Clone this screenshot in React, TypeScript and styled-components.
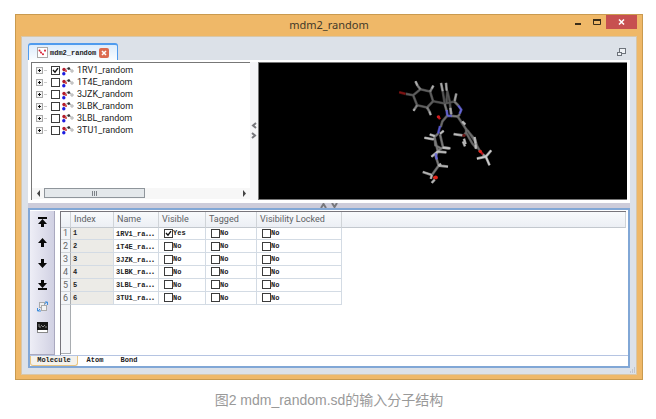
import React, { useState } from "react";
import styled, { createGlobalStyle } from "styled-components";

const mono = `"Liberation Mono", monospace`;
const humanist = `"Noto Sans", "Open Sans", sans-serif`;
const compact = `Roboto, "Open Sans", sans-serif`;

const GlobalStyle = createGlobalStyle`
  *, *::before, *::after { box-sizing: border-box; }
  body { margin: 0; background: #fff; }
  button { appearance: none; border: 0; background: none; padding: 0; margin: 0; font: inherit; color: inherit; }
`;

const Page = styled.main`
  padding: 14px 13px 0 15px;
`;

const Window = styled.section`
  border: 1px solid #c99a4f;
  background: #efb868;
  padding: 0 5px 4px;
`;

const TitleBar = styled.header`
  display: grid;
  grid-template-columns: 1fr auto 1fr;
  height: 21px;
`;

const Title = styled.h1`
  grid-column: 2;
  margin: 0;
  font: 400 11px/20px ${humanist};
  color: #43382a;
`;

const WindowButtons = styled.div`
  display: flex;
  justify-content: flex-end;
`;

const WindowButton = styled.button<{ $close?: boolean }>`
  display: flex;
  align-items: center;
  justify-content: center;
  width: ${(p) => (p.$close ? 31 : 19)}px;
  height: 14px;
  background: ${(p) => (p.$close ? "#c75050" : "transparent")};
`;

const Client = styled.div`
  background: #dce1e8;
  border: 1px solid #d9c7a8;
  padding: 6px 6px 0;
`;

const DocumentBar = styled.div`
  display: flex;
  justify-content: space-between;
  align-items: center;
  height: 17px;
`;

const DocumentTab = styled.div`
  display: flex;
  align-items: center;
  gap: 3px;
  width: 90px;
  height: 17px;
  padding: 0 8px;
  border: 1px solid #4f9bee;
  border-top-width: 2px;
  border-bottom: 0;
  border-radius: 3px 3px 0 0;
  background: linear-gradient(#dcecfc, #fafdff);
  font: 700 7px/12px ${mono};
  color: #222;
  white-space: nowrap;
`;

const DocumentIcon = styled.svg`
  flex: none;
  margin-right: -1px;
`;

const CloseTab = styled.button`
  display: flex;
  flex: none;
  align-items: center;
  justify-content: center;
  width: 10px;
  height: 10px;
  border-radius: 2px;
  background: #dc6b50;
`;

const FloatButton = styled.button`
  display: flex;
  margin-right: 4px;
`;

const ViewerPane = styled.div`
  display: flex;
  padding: 2px 3px 3px;
  background: #fff;
`;

const TreePanel = styled.section`
  display: flex;
  flex-direction: column;
  flex: 219 1 0;
  min-height: 137px;
  border-left: 1px solid #777;
  border-top: 1px solid #777;
  background: #fff;
`;

const TreeList = styled.ul`
  display: grid;
  grid-template-rows: repeat(6, 1fr);
  height: 73px;
  margin: 0;
  padding: 2px 0 0 4px;
  list-style: none;
`;

const TreeRow = styled.li`
  display: flex;
  align-items: center;
  color: #222;
  font: 400 9px/11px ${compact};
`;

const Expander = styled.button`
  display: flex;
  width: 15px;
`;

const RowLabel = styled.label`
  display: flex;
  align-items: center;
`;

const MoleculeIcon = styled.svg`
  margin: 0 3px 0 2px;
`;

const CheckBox = styled.input`
  appearance: none;
  flex: none;
  width: 9px;
  height: 9px;
  margin: 0;
  border: 1px solid #3c3c3c;
  background: #fff;

  &:checked {
    background-image: url("data:image/svg+xml,%3Csvg xmlns='http://www.w3.org/2000/svg' viewBox='0 0 7 7'%3E%3Cpath d='M1 3L3 5.2L6 1.2' fill='none' stroke='%23111' stroke-width='1.4'/%3E%3C/svg%3E");
    background-size: 7px 7px;
    background-repeat: no-repeat;
  }
`;

const ScrollBar = styled.div`
  display: flex;
  align-items: center;
  height: 11px;
  margin-top: auto;
  margin-bottom: 1px;
  background: #f7f7f7;
`;

const ScrollButton = styled.button`
  display: flex;
  justify-content: center;
  width: 12px;
`;

const ScrollTrack = styled.div`
  flex: 1;
`;

const ScrollThumb = styled.div`
  display: flex;
  align-items: center;
  justify-content: center;
  gap: 1px;
  width: 52%;
  height: 10px;
  border: 1px solid #8f959b;
  background: #e4e8eb;
`;

const GripLine = styled.span`
  width: 1px;
  height: 5px;
  background: #7d8288;
`;

const VerticalSplitter = styled.div`
  display: flex;
  flex-direction: column;
  align-items: center;
  justify-content: center;
  gap: 3px;
  width: 8px;
  background: #f5f5f7;
`;

const Viewport = styled.div`
  flex: 369 1 0;
  border: 1px solid #777;
  border-right: 0;
  background: #000;
  overflow: hidden;
`;

const Scene = styled.svg`
  display: block;
  width: 100%;
  height: 100%;
`;

const HorizontalSplitter = styled.div`
  display: flex;
  align-items: center;
  justify-content: center;
  gap: 4px;
  height: 5px;
  background: #cdccda;
`;

const DataPane = styled.section`
  border: 2px solid #81a7d6;
  background: #fff;
`;

const DataBody = styled.div`
  display: flex;
  gap: 5px;
  padding: 1px 2px 0 0;
`;

const ToolBar = styled.div`
  display: flex;
  flex-direction: column;
  align-items: center;
  gap: 7px;
  width: 25px;
  padding-top: 5px;
  border-right: 1px solid #aaa9bf;
  border-bottom: 1px solid #aaa9bf;
  background: linear-gradient(90deg, #eeeef6, #d1d1e3);
`;

const ToolButton = styled.button`
  display: flex;
  align-items: center;
  justify-content: center;
  width: 14px;
  height: 14px;
`;

const TableFrame = styled.div`
  display: flex;
  flex-direction: column;
  flex: 1;
  min-height: 144px;
  padding-bottom: 1px;
  border-top: 1px solid #77757b;
  border-left: 1px solid #77757b;
`;

const DataTable = styled.table`
  width: 100%;
  height: 93px;
  table-layout: fixed;
  border-collapse: separate;
  border-spacing: 0;
`;

const Column = styled.col<{ $width?: number }>`
  width: ${(p) => (p.$width ? `${p.$width}px` : "auto")};
`;

const HeaderCell = styled.th`
  height: 16px;
  padding: 0 0 0 3px;
  border-right: 1px solid #d0d4d8;
  border-bottom: 1px solid #c3c8ce;
  background: linear-gradient(#f8fafc, #eceff4);
  font: 400 9px/12px ${compact};
  color: #5d6165;
  text-align: left;
  white-space: nowrap;
`;

const IndexHead = styled.th`
  padding: 0;
  border-right: 1px solid #a9adb1;
  border-bottom: 1px solid #d0d4d8;
  background: #f3f5f8;
  font: 400 9px/10px ${compact};
  color: #666;
`;

const Cell = styled.td<{ $shaded?: boolean }>`
  padding: 0 0 0 2px;
  border-right: 1px solid #d3dbe4;
  border-bottom: 1px solid #d3dbe4;
  background: ${(p) => (p.$shaded ? "#ecebe7" : "#fff")};
  font: 700 7px/10px ${mono};
  color: #222;
  white-space: nowrap;
`;

const Ellipsis = styled.span`
  font-family: "Noto Sans CJK SC", sans-serif;
  font-size: 8px;
`;

const CellLabel = styled.label`
  display: flex;
  align-items: center;
  padding-left: 3px;
`;

const IndexGutter = styled.div`
  flex: 1;
  width: 10px;
  border-right: 1px solid #a9adb1;
  border-bottom: 1px solid #a9adb1;
  background: #f5f6f8;
`;

const SheetTabs = styled.nav`
  display: flex;
  height: 11px;
  border-top: 1px solid #b5c4e2;
`;

const SheetTab = styled.button<{ $active?: boolean }>`
  min-width: ${(p) => (p.$active ? 48 : 34)}px;
  border: solid ${(p) => (p.$active ? "#e9c582" : "transparent")};
  border-width: 0 1px 1px;
  border-radius: 0 0 3px 3px;
  background: ${(p) => (p.$active ? "#f4f2ec" : "#fff")};
  font: 700 7px/9px ${mono};
  color: #222;
`;

const StatusBar = styled.footer`
  display: flex;
  justify-content: flex-end;
  align-items: flex-end;
  height: 6px;
  margin-right: -6px;
`;

const Caption = styled.p`
  margin: 10px 0 0;
  font: 400 14px/20px "Liberation Sans", "Noto Sans CJK SC", sans-serif;
  color: #999;
  text-align: center;
`;

const names = ["1RV1_random", "1T4E_random", "3JZK_random", "3LBK_random", "3LBL_random", "3TU1_random"];
const flags = ["Visible", "Tagged", "Visibility Locked"];

type Stick = [string, string];

const sticks: Stick[] = [
  ["#606060", "M76 102L98 106L120 88L149 95L158 124L140 143L110 136L98 106"],
  ["#858585", "M120 88L111 77M149 95L154 86M110 136L103 147M140 143L147 155"],
  ["#b4b4b4", "M111 77L105 64M154 86L159 77M103 147L99 153M147 155L151 166"],
  ["#801414", "M56 97L75 102"],
  ["#555555", "M158 124L193 131L222 125M193 131L187 94M198 132L201 94L208 124L212 162"],
  ["#a8a8a8", "M187 94L182 69M199 92L197 69M210 144L213 164M223 123L228 101"],
  ["#7c7c7c", "M222 125L234 137M193 133L199 153M212 168L232 170L239 163"],
  ["#6868d8", "M234 137L243 150L238 162M199 151L201 168L214 168"],
  ["#6c6c6c", "M200 168L186 185L181 202M232 170L248 194L258 209L284 239M257 206L258 217L251 227M262 212L287 248L288 265L276 251L257 218M284 239L291 260L300 276"],
  ["#bd1720", "M173 169L179 178M300 275L309 285"],
  ["#5858ce", "M179 199L173 222"],
  ["#7b7b7b", "M173 222L162 232L172 273L188 263L179 224M163 234L165 257L183 267M188 263L206 266M172 274L166 290L175 318L156 344"],
  ["#c4c4c4", "M148 224L163 229M179 222L190 213M132 234L160 239M187 264L210 266M173 276L198 278M173 275L153 291"],
  ["#6767d6", "M166 281L169 299"],
  ["#b8b8b8", "M176 318L203 321M174 319L182 312M127 337L154 346M155 345L151 358"],
  ["#d42318", "M158 354L171 354"],
  ["#bebebe", "M154 370L163 360M246 185L255 194M220 223L247 227M251 237L256 253M248 245L254 260M283 232L286 252M286 254L287 267"],
  ["#999999", "M308 285L317 291"],
  ["#d0d0d0", "M290 297L317 291L333 272M317 291L328 317"],
];

function Molecule() {
  return (
    <Scene viewBox="0 0 369 136" role="img" aria-label="Molecule structure">
      <g transform="translate(122 -3) scale(0.3333)" fill="none" strokeLinejoin="round">
        {sticks.map(([color, d]) => (
          <g key={d}>
            <path d={d} stroke={color} strokeWidth="8" opacity="0.7" />
            <path d={d} stroke={color} strokeWidth="4" />
          </g>
        ))}
        <circle cx="174" cy="171" r="5" fill="#d01d20" />
        <circle cx="166" cy="354" r="6" fill="#e12419" />
        <circle cx="300" cy="275" r="5" fill="#e12419" />
        <circle cx="251" cy="227" r="5" fill="#6b1717" />
      </g>
    </Scene>
  );
}

function MoleculeGlyph() {
  return (
    <MoleculeIcon width="12" height="10" viewBox="0 0 12 10" aria-hidden="true">
      <path d="M2 7L2 4L7 2L10 5" fill="none" stroke="#aaa" />
      <circle cx="2" cy="3.5" r="1.7" fill="#b31b2a" />
      <circle cx="1.8" cy="7.8" r="1.7" fill="#1c1ce0" />
      <circle cx="4" cy="5" r="1" fill="#c33" />
      <circle cx="6.8" cy="2.6" r="1.4" fill="#333" />
      <circle cx="10" cy="5" r="1.2" fill="#fff" stroke="#888" strokeWidth="0.7" />
    </MoleculeIcon>
  );
}

function Arrow({ direction }: { direction: "left" | "right" }) {
  return (
    <svg width="5" height="7" viewBox="0 0 5 7" aria-hidden="true">
      <path d={direction === "left" ? "M4 0V7L1 3.5Z" : "M1 0V7L4 3.5Z"} fill="#444" />
    </svg>
  );
}

function Chevron({ d, wide }: { d: string; wide?: boolean }) {
  return (
    <svg width={wide ? 7 : 6} height={wide ? 5 : 7} aria-hidden="true">
      <path d={d} fill="none" stroke="#77777c" strokeWidth="2" />
    </svg>
  );
}

const arrowDown = "M4 0H7V4H10L5.5 9L1 4H4Z";
const arrowUp = "M5.5 0L10 5H7V9H4V5H1Z";

const tools = [
  { label: "Move to top", art: <path d="M1 0H10V2H1ZM5.5 2L10 7H7V10H4V7H1Z" /> },
  { label: "Move up", art: <path d={arrowUp} /> },
  { label: "Move down", art: <path d={arrowDown} /> },
  { label: "Move to bottom", art: <path d="M4 0H7V3H10L5.5 8L1 3H4ZM1 8H10V10H1Z" /> },
  {
    label: "Swap",
    art: (
      <g fill="none">
        <rect x="2.5" y="1.5" width="5" height="5" fill="#eee" stroke="#aaa" />
        <rect x="4.5" y="4.5" width="5" height="5" fill="#f4f4f4" stroke="#aaa" />
        <path d="M8 1H10.5V4M7.5 3L10 1" stroke="#3f8fdc" />
        <path d="M0.5 7V10H4M1 10L3 8" stroke="#3f8fdc" />
      </g>
    ),
  },
  {
    label: "Plot",
    art: (
      <g>
        <rect x="0.5" y="0.5" width="10" height="10" fill="#fff" stroke="#888" />
        <rect x="0" y="0" width="11" height="8" fill="#151515" />
        <path d="M2 2V5H4M4 3L6 5L8 3M8 5H10" fill="none" stroke="#bbb" strokeWidth="0.7" />
      </g>
    ),
  },
];

export default function App() {
  const [visible, setVisible] = useState([true, false, false, false, false, false]);
  const toggle = (i: number) => setVisible((v) => v.map((on, k) => (k === i ? !on : on)));

  return (
    <Page>
      <GlobalStyle />
      <Window>
        <TitleBar>
          <Title>mdm2_random</Title>
          <WindowButtons>
            <WindowButton aria-label="Minimize">
              <svg width="6" height="8"><path d="M0 6H6" stroke="#3b2d18" strokeWidth="2" /></svg>
            </WindowButton>
            <WindowButton aria-label="Maximize">
              <svg width="8" height="7"><path d="M0.5 1V5.5H7.5V1" fill="none" stroke="#3b2d18" /><path d="M0 1H8" stroke="#3b2d18" strokeWidth="2" /></svg>
            </WindowButton>
            <WindowButton $close aria-label="Close">
              <svg width="7" height="6"><path d="M1 0.5L6 5.5M6 0.5L1 5.5" stroke="#fff" strokeWidth="1.5" /></svg>
            </WindowButton>
          </WindowButtons>
        </TitleBar>
        <Client>
          <DocumentBar>
            <DocumentTab>
              <DocumentIcon width="11" height="11" viewBox="0 0 11 11" aria-hidden="true">
                <rect x="0.5" y="0.5" width="10" height="10" fill="#fff" stroke="#aaa" />
                <path d="M2.5 3.5L4 6L6 7M8 3.5V5" stroke="#e49" strokeWidth="0.6" fill="none" />
                <g fill="#d32a34"><circle cx="2.5" cy="3.5" r="1" /><circle cx="4" cy="5.5" r="1" /><circle cx="6" cy="7.3" r="1" /><circle cx="8" cy="3.5" r="1" /></g>
              </DocumentIcon>
              mdm2_random
              <CloseTab aria-label="Close tab">
                <svg width="6" height="6"><path d="M1 1L5 5M5 1L1 5" stroke="#fff" strokeWidth="1.5" /></svg>
              </CloseTab>
            </DocumentTab>
            <FloatButton aria-label="Float window">
              <svg width="9" height="8" viewBox="0 0 9 8">
                <rect x="2.5" y="0.5" width="6" height="5" fill="#eef1f5" stroke="#6d737b" />
                <rect x="0.5" y="4.5" width="4" height="3" fill="#eef1f5" stroke="#6d737b" />
              </svg>
            </FloatButton>
          </DocumentBar>

          <ViewerPane>
            <TreePanel>
              <TreeList>
                {names.map((name, i) => (
                  <TreeRow key={name}>
                    <Expander aria-label={`Expand ${name}`}>
                      <svg width="11" height="9" viewBox="0 0 11 9">
                        <path d="M8 4.5H11" stroke="#ccc" />
                        <rect x="0.5" y="1.5" width="6" height="6" fill="#f4f4f4" stroke="#aaa" />
                        <path d="M2 4.5H5M3.5 3V6" stroke="#111" />
                      </svg>
                    </Expander>
                    <RowLabel>
                      <CheckBox type="checkbox" checked={visible[i]} onChange={() => toggle(i)} />
                      <MoleculeGlyph />
                      {name}
                    </RowLabel>
                  </TreeRow>
                ))}
              </TreeList>
              <ScrollBar>
                <ScrollButton aria-label="Scroll left"><Arrow direction="left" /></ScrollButton>
                <ScrollTrack>
                  <ScrollThumb><GripLine /><GripLine /><GripLine /></ScrollThumb>
                </ScrollTrack>
                <ScrollButton aria-label="Scroll right"><Arrow direction="right" /></ScrollButton>
              </ScrollBar>
            </TreePanel>
            <VerticalSplitter>
              <Chevron d="M5 1L2 3.5L5 6" />
              <Chevron d="M1 1L4 3.5L1 6" />
            </VerticalSplitter>
            <Viewport><Molecule /></Viewport>
          </ViewerPane>

          <HorizontalSplitter>
            <Chevron wide d="M1 5L3.5 1L6 5" />
            <Chevron wide d="M1 0L3.5 4L6 0" />
          </HorizontalSplitter>

          <DataPane>
            <DataBody>
              <ToolBar>
                {tools.map((tool) => (
                  <ToolButton key={tool.label} aria-label={tool.label}>
                    <svg width="11" height="11" viewBox="0 0 11 11" fill="#080808">{tool.art}</svg>
                  </ToolButton>
                ))}
              </ToolBar>
              <TableFrame>
                <DataTable>
                  <colgroup>
                    <Column $width={10} />
                    <Column $width={43} />
                    <Column $width={45} />
                    <Column $width={47} />
                    <Column $width={51} />
                    <Column $width={85} />
                    <Column />
                  </colgroup>
                  <thead>
                    <tr>
                      <HeaderCell aria-label="Row" />
                      <HeaderCell>Index</HeaderCell>
                      <HeaderCell>Name</HeaderCell>
                      {flags.map((flag) => <HeaderCell key={flag}>{flag}</HeaderCell>)}
                      <HeaderCell aria-hidden="true" />
                    </tr>
                  </thead>
                  <tbody>
                    {names.map((name, i) => (
                      <tr key={name}>
                        <IndexHead scope="row">{i + 1}</IndexHead>
                        <Cell $shaded>{i + 1}</Cell>
                        <Cell>{name.slice(0, 7)}<Ellipsis>⋯</Ellipsis></Cell>
                        {flags.map((flag, k) => (
                          <Cell key={flag}>
                            <CellLabel>
                              {k === 0 ? (
                                <CheckBox type="checkbox" checked={visible[i]} onChange={() => toggle(i)} />
                              ) : (
                                <CheckBox type="checkbox" />
                              )}
                              {k === 0 && visible[i] ? "Yes" : "No"}
                            </CellLabel>
                          </Cell>
                        ))}
                      </tr>
                    ))}
                  </tbody>
                </DataTable>
                <IndexGutter />
              </TableFrame>
            </DataBody>
            <SheetTabs>
              <SheetTab $active>Molecule</SheetTab>
              <SheetTab>Atom</SheetTab>
              <SheetTab>Bond</SheetTab>
            </SheetTabs>
          </DataPane>
          <StatusBar>
            <svg width="8" height="7" aria-hidden="true">
              <path d="M6 1h1M4 3h1M6 3h1M2 5h1M4 5h1M6 5h1" stroke="#a4aab4" />
            </svg>
          </StatusBar>
        </Client>
      </Window>
      <Caption>图2 mdm_random.sd的输入分子结构</Caption>
    </Page>
  );
}
